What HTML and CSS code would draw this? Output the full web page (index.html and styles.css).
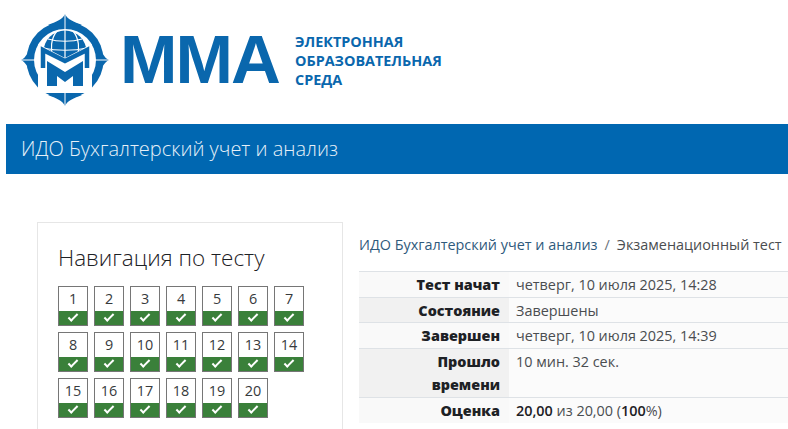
FILE: index.html
```html
<!DOCTYPE html>
<html lang="ru">
<head>
    <meta charset="UTF-8">
    <title>Экзаменационный тест</title>
    <link rel="stylesheet" href="styles.css">
</head>
<body>
<header class="logo-bar">
    <svg class="logo-mark" width="90" height="94" viewBox="0 0 90 94" aria-hidden="true">
        <circle cx="45" cy="47" r="38.5" fill="#0a67ad"/>
        <path fill="#0a67ad" d="M45 1C47 6 54 9 62 12H28C36 9 43 6 45 1ZM45 93C47 88 54 85 62 82H28C36 85 43 88 45 93ZM1 47C6 45 9 38 12 30V64C9 56 6 49 1 47ZM89 47C84 45 81 38 78 30V64C81 56 84 49 89 47Z"/>
        <path stroke="#fff" stroke-width="1" d="M45 1V17M45 77V93M1 47H15M75 47H89"/>
        <circle cx="45" cy="47" r="31" fill="#fff"/>
        <circle cx="45" cy="39" r="21.5" fill="#0a67ad"/>
        <path fill="none" stroke="#fff" stroke-width="1.2" d="M45 17V50M37 18C31 25 30 36 33 46M53 18C59 25 60 36 57 46M28 26C38 29 52 29 62 26M24 35C36 38 54 38 66 35"/>
        <path fill="#fff" d="M18 31L45 45L72 31V80H18Z"/>
        <path fill="none" stroke="#0a67ad" stroke-width="4.5" d="M23 55V37L45 48L67 37V55"/>
        <path fill="#0a67ad" d="M27 48L45 59L63 48V73H53V63L45 69L37 63V73H27Z"/>
    </svg>
    <div class="logo-name">ММА</div>
    <div class="logo-sub">ЭЛЕКТРОННАЯ<br>ОБРАЗОВАТЕЛЬНАЯ<br>СРЕДА</div>
</header>

<div class="course-bar">ИДО Бухгалтерский учет и анализ</div>

<div class="page">
    <aside class="nav-block">
        <h2>Навигация по тесту</h2>
        <div class="nav-grid">
            <a class="qn">1<span class="qn-ok"><i></i></span></a>
            <a class="qn">2<span class="qn-ok"><i></i></span></a>
            <a class="qn">3<span class="qn-ok"><i></i></span></a>
            <a class="qn">4<span class="qn-ok"><i></i></span></a>
            <a class="qn">5<span class="qn-ok"><i></i></span></a>
            <a class="qn">6<span class="qn-ok"><i></i></span></a>
            <a class="qn">7<span class="qn-ok"><i></i></span></a>
            <a class="qn">8<span class="qn-ok"><i></i></span></a>
            <a class="qn">9<span class="qn-ok"><i></i></span></a>
            <a class="qn">10<span class="qn-ok"><i></i></span></a>
            <a class="qn">11<span class="qn-ok"><i></i></span></a>
            <a class="qn">12<span class="qn-ok"><i></i></span></a>
            <a class="qn">13<span class="qn-ok"><i></i></span></a>
            <a class="qn">14<span class="qn-ok"><i></i></span></a>
            <a class="qn">15<span class="qn-ok"><i></i></span></a>
            <a class="qn">16<span class="qn-ok"><i></i></span></a>
            <a class="qn">17<span class="qn-ok"><i></i></span></a>
            <a class="qn">18<span class="qn-ok"><i></i></span></a>
            <a class="qn">19<span class="qn-ok"><i></i></span></a>
            <a class="qn">20<span class="qn-ok"><i></i></span></a>
        </div>
    </aside>

    <main class="content">
        <nav class="crumbs"><a>ИДО Бухгалтерский учет и анализ</a><span class="sep">/</span>Экзаменационный тест</nav>
        <table class="summary">
            <tr><th>Тест начат</th><td>четверг, 10 июля 2025, 14:28</td></tr>
            <tr><th>Состояние</th><td>Завершены</td></tr>
            <tr><th>Завершен</th><td>четверг, 10 июля 2025, 14:39</td></tr>
            <tr><th>Прошло времени</th><td>10 мин. 32 сек.</td></tr>
            <tr><th>Оценка</th><td><b>20,00</b> из 20,00 (<b>100</b>%)</td></tr>
        </table>
    </main>
</div>
</body>
</html>
```

FILE: styles.css
```css
html, body { height: 429px; overflow: hidden; }
body { margin: 0; background-color: #fff; color: #373a3c; font-family: "Open Sans", sans-serif; font-size: 14.4px; }

.logo-bar { height: 124px; box-sizing: border-box; padding: 13px 0 0 20px; display: flex; align-items: flex-start; color: #0a67ad; }
.logo-mark { flex: none; }
.logo-name { width: 175px; margin: 3px 0 0 10px; font-family: "Liberation Sans", sans-serif; font-size: 69px; line-height: 88px; font-weight: 700; letter-spacing: -2px; }
.logo-sub { margin: 19px 0 0 0; font-size: 14.4px; line-height: 19px; font-weight: 700; }

.course-bar { height: 50px; margin-left: 6px; padding-left: 15px; background-color: #0067b1; color: #e6f0f8; font-size: 20px; font-weight: 300; line-height: 50px; }

.page { display: flex; align-items: flex-start; margin-top: 48px; padding-left: 37px; }

.nav-block { width: 306px; height: 207px; flex: none; box-sizing: border-box; padding: 20px 20px 0; border: 1px solid #e6e6e6; border-bottom: 0; }
.nav-block h2 { margin: 0 0 14px; color: #1d2125; font-size: 22.5px; line-height: 29px; font-weight: 300; }
.nav-grid { display: grid; grid-template-columns: repeat(7, 30px); grid-auto-rows: 40px; gap: 6px; }
.qn { display: block; box-sizing: border-box; border: 1px solid #767676; background-color: #fff; color: #373a3c; line-height: 24px; text-align: center; }
.qn-ok { display: block; height: 14px; background-color: #3a803a; }
.qn-ok i { display: block; width: 8px; height: 3px; margin: 0 auto; border-left: 2px solid #fff; border-bottom: 2px solid #fff; transform: translateY(3px) rotate(-45deg); }

.content { width: 429px; margin-left: 16px; flex: none; }
.crumbs { margin-top: 13px; height: 36px; line-height: 20px; white-space: nowrap; color: #4a4d50; }
.crumbs a { color: #2f5a7c; }
.crumbs .sep { margin: 0 7px; color: #6a737b; }

.summary { width: 429px; border-collapse: collapse; border-top: 1px solid #dee2e6; }
.summary th, .summary td { border-bottom: 1px solid #dee2e6; padding: 1px 6px 0; line-height: 23.6px; vertical-align: top; }
.summary th { width: 117px; padding: 1px 9px 0 24px; text-align: right; color: #1d2125; font-weight: 800; }
.summary td { padding-left: 7px; color: #4a4d50; background-color: #fbfbfb; }
.summary td b { color: #1d2125; font-weight: 600; }
.summary tr:nth-child(odd) th { background-color: #f9f9f9; }
.summary tr:nth-child(even) th { background-color: #f1f1f1; }
.summary tr:last-child th, .summary tr:last-child td { border-bottom: 0; }
```
